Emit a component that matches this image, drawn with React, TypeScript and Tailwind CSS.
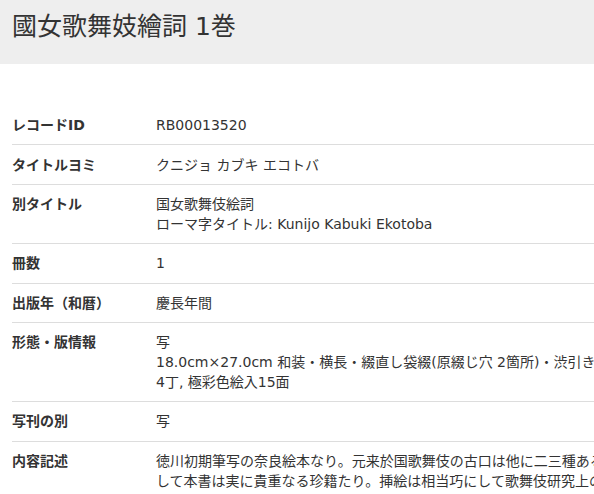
const rows: { label: string; lines: string[] }[] = [
  { label: "レコードID", lines: ["RB00013520"] },
  { label: "タイトルヨミ", lines: ["クニジョ カブキ エコトバ"] },
  { label: "別タイトル", lines: ["国女歌舞伎絵詞", "ローマ字タイトル: Kunijo Kabuki Ekotoba"] },
  { label: "冊数", lines: ["1"] },
  { label: "出版年（和暦）", lines: ["慶長年間"] },
  {
    label: "形態・版情報",
    lines: [
      "写",
      "18.0cm×27.0cm 和装・横長・綴直し袋綴(原綴じ穴 2箇所)・渋引き表紙",
      "4丁, 極彩色絵入15面",
    ],
  },
  { label: "写刊の別", lines: ["写"] },
  {
    label: "内容記述",
    lines: [
      "徳川初期筆写の奈良絵本なり。元来於国歌舞伎の古口は他に二三種あるのみに",
      "して本書は実に貴重なる珍籍たり。挿絵は相当巧にして歌舞伎研究上の好資料なり。",
    ],
  },
];

export default function App() {
  return (
    <div
      className="w-[594px] h-[494px] overflow-hidden bg-white text-[#333]"
      style={{ fontFamily: '"DejaVu Sans", "Noto Sans CJK JP", sans-serif' }}
    >
      <div className="w-[1000px]">
        <div className="bg-[#eeeeee] h-[64px] px-3 pt-[9px]">
          <h1 className="text-[25px] leading-[36px] font-normal">國女歌舞妓繪詞 1巻</h1>
        </div>
        <div className="px-3 pt-[42px]">
          {rows.map((r) => (
            <div key={r.label} className="flex border-b border-[#dddddd] py-[9.2px]">
              <div className="w-[144px] shrink-0 text-[14px] leading-[20px] font-bold">{r.label}</div>
              <div className="text-[14px] leading-[20px] whitespace-nowrap">
                {r.lines.map((l, i) => (
                  <div key={i}>{l}</div>
                ))}
              </div>
            </div>
          ))}
        </div>
      </div>
    </div>
  );
}
